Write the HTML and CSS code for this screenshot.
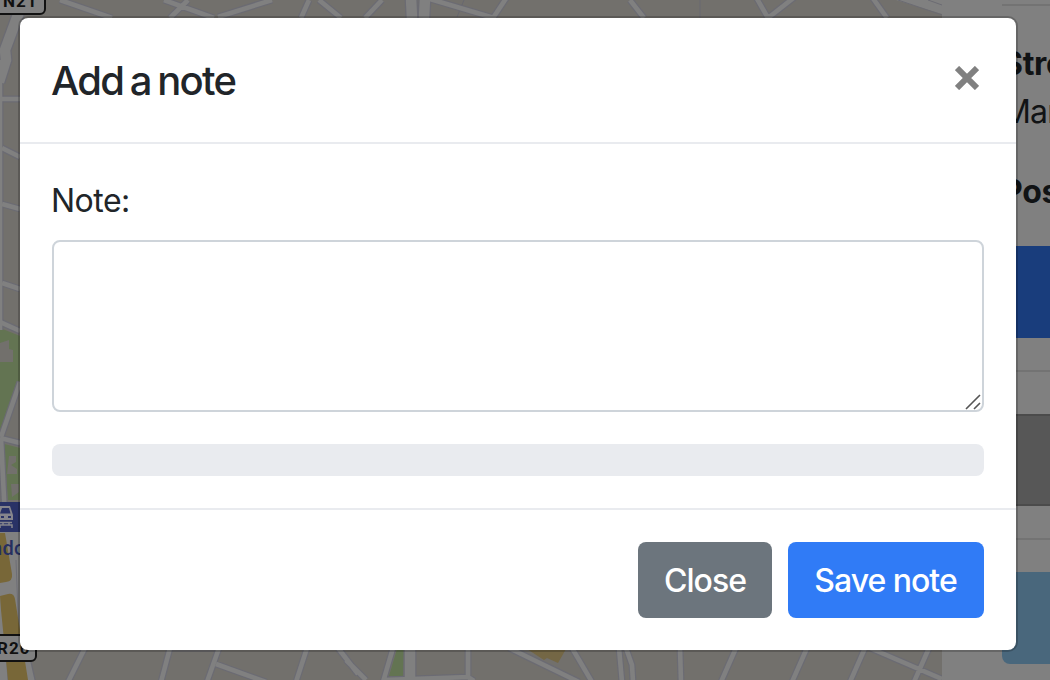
FILE: index.html
```html
<!DOCTYPE html>
<html lang="en">
<head>
<meta charset="utf-8">
<title>Add a note</title>
<link rel="stylesheet" href="styles.css">
</head>
<body>
<div class="page">
  <svg class="map" viewBox="0 0 942 680" aria-hidden="true">
    <defs>
      <g id="streets">
        <path d="M60 0l52 18M164 0l50 18M188 0l-18 18M272 0l-54 17M309 0l-8 18M319 0l22 18M382 0l-17 18M430-1l64 19M507-3l-14 21M630 0l14 18M756-3l12 21M796-4l-28 22M872-3l15 21M900-4l42 14"/>
        <path d="M0 99h20M2 148l18 9M2 204l18 5M2 283l18 6M-2 321l22 10M20 382L1 437M0 438l20 5M1 438l5 100"/>
        <path d="M85 648L68 682M170 648l-9 34M219 648l-12 34M216 664l50 18M307 648l-11 34M338 648l20 26M346 660l20 20M393 648l-10 34M468 648v28M383 680l85-3 6 4M509 648l70 34M572 648l20 34M619 648l3 34M626 648l6 17 1 17M680 648l1 34M736 648l-15 34M807 648l-15 34M865 648l-15 34M870 648l72 31M929 648l-15 34"/>
      </g>
      <g id="avenues">
        <path d="M19 12L5 50l1 10-7 22M411-2l1 20M425-2l-1 20M410 648v34M-3 60v270"/>
        <path d="M1 560l6 120M20 640l10 44"/>
      </g>
    </defs>
    <rect width="942" height="680" fill="#72706c"/>
    <path d="M700 0v18M464 0l-7 17M170 651h48" stroke="#686870"/>
    <g fill="#637452">
      <path d="M0 328l20 8v44L0 430zM4 444l16 4v52H8zM397 649h7l-1 27h-14z"/>
    </g>
    <path d="M0 343l9-3v9l4 1v12H0zM9 456h7v6l-5 3 6 4v5H7zM11 484h8v8l-7 5z" fill="#72706c"/>
    <path d="M527 649h39l-8 14-11-5-3 2z" fill="#746745"/>
    <g fill="none" stroke="#6b6b73">
      <use href="#streets" stroke-width="7"/>
      <use href="#avenues" stroke-width="13"/>
    </g>
    <g fill="none" stroke="#808080">
      <use href="#streets" stroke-width="4.6"/>
      <use href="#avenues" stroke-width="10.5"/>
    </g>
    <path d="M896 0h46v14z" fill="#808080"/>
    <path d="M898 0l44 15M928 0l14 5" stroke="#6b6b73"/>
    <path d="M0 502h20v128l14 52H0z" fill="#808080"/>
    <path d="M3 596l5 86M16 560l3 80" stroke="#6e6e76"/>
    <g fill="#786738">
      <path d="M0 533h5l7 41q1 7-6 8l-6 1zM0 596l8-2q6-1 7 5l13 81H8L1 610z"/>
    </g>
    <rect y="502" width="20" height="30" fill="#293266"/>
    <path d="M0 506h10l3 9v5H-1v-5z" fill="#85858c"/>
    <path d="M2 508h7l1.500 5.500H0zM1 516h3v2H1zM8 516h3v2H8z" fill="#293266"/>
    <path d="M0 522.500h12M3 522v3H0v3M9 522v3h3v3M3 525h6" fill="none" stroke="#85858c" stroke-width="1.500"/>
    <text class="map-station" x="-9" y="555">ndo</text>
    <g class="shield">
      <rect x="-30" y="-15" width="75" height="29" rx="5"/>
      <text x="3" y="7">N21</text>
      <rect x="-30" y="635" width="66" height="26" rx="5"/>
      <text x="-3" y="654">R20</text>
    </g>
  </svg>
  <aside class="sidebar">
    <hr class="rule">
    <div class="field-name">Street:</div>
    <div class="field-value">Maria</div>
    <div class="field-name field-name-post">Postcode:</div>
    <div class="block block-primary"></div>
    <hr class="rule">
    <div class="block block-dark"></div>
    <hr class="rule">
    <div class="block block-info"></div>
  </aside>
</div>
<section class="modal" role="dialog" aria-labelledby="title">
  <header class="modal-header">
    <h1 class="modal-title" id="title">Add a note</h1>
    <button class="dismiss" aria-label="Close">
      <svg width="24" height="24" viewBox="0 0 24 24"><path d="M2 2l20 20M22 2L2 22" stroke="#808080" stroke-width="6"/></svg>
    </button>
  </header>
  <div class="modal-body">
    <label class="label" for="note">Note:</label>
    <div class="note-box">
      <textarea class="note" id="note"></textarea>
      <svg class="grip" width="16" height="16" viewBox="0 0 16 16"><path d="M1 15L15 1M9 15l6-6" stroke="#555" stroke-width="1.6"/></svg>
    </div>
    <div class="progress"></div>
  </div>
  <footer class="modal-footer">
    <button class="btn btn-secondary">Close</button>
    <button class="btn btn-primary">Save note</button>
  </footer>
</section>
</body>
</html>
```
FILE: styles.css
```css
* { box-sizing: border-box; }
body {
  margin: 0;
  width: 1050px;
  height: 680px;
  overflow: hidden;
  background: #808080;
  color: #212529;
  font-family: Inter, "Liberation Sans", sans-serif;
  font-size: 32px;
}
.page { display: flex; width: 1050px; height: 680px; }
.map { flex: 0 0 942px; height: 680px; display: block; }
.map-station { font: 500 20px Roboto, sans-serif; fill: #262f60; letter-spacing: .3px; }
.shield rect { fill: #808080; stroke: #111; stroke-width: 2; }
.shield text { font: 700 17px Roboto, sans-serif; fill: #111; letter-spacing: 1px; }
.sidebar {
  flex: 0 0 108px;
  padding: 4px 0 0 60px;
  overflow: hidden;
  white-space: nowrap;
  color: #111315;
}
.rule { margin: 0; border: 0; height: 2px; background: #737373; }
.field-name { margin-top: 32px; padding-top: 2px; height: 48px; font-weight: 700; line-height: 48px; letter-spacing: -.3px; }
.field-value { padding-top: 2px; height: 48px; line-height: 48px; letter-spacing: -.8px; }
.block { height: 92px; margin: 32px 0; width: 200px; }
.block-primary { background: #193d7c; }
.block-dark { margin: 42px 0 32px; background: #575757; border: 2px solid #4b4b4b; }
.block-info { background: #49677c; border-radius: 0 0 8px 8px; }
.modal {
  position: absolute;
  left: 18px;
  top: 16px;
  width: 1000px;
  height: 636px;
  display: flex;
  flex-direction: column;
  border: 2px solid rgba(0, 0, 0, .2);
  border-radius: 10px;
  background: #fff;
  background-clip: padding-box;
}
.modal-header {
  display: flex;
  justify-content: space-between;
  height: 126px;
  padding: 32px 32px 32px 31px;
  border-bottom: 2px solid #e9ebef;
}
.modal-title {
  margin: 0;
  padding-top: 1px;
  font-size: 40px;
  line-height: 60px;
  font-weight: 500;
  letter-spacing: -1.8px;
  word-spacing: -2.2px;
}
.dismiss { width: 24px; height: 24px; margin: 16px 5px 0 0; padding: 0; border: 0; background: none; }
.dismiss svg { display: block; }
.modal-body { flex: 1; padding: 32px; }
.label { display: block; height: 48px; padding-top: 1px; margin: 0 0 16px -1px; line-height: 48px; letter-spacing: -.5px; }
.note-box { position: relative; height: 172px; }
.note {
  display: block;
  width: 100%;
  height: 100%;
  border: 2px solid #ced4da;
  border-radius: 8px;
  resize: none;
  background: #fff;
}
.grip { position: absolute; right: 3px; bottom: 2px; }
.progress { height: 32px; margin-top: 32px; border-radius: 8px; background: #e9ebef; }
.modal-footer {
  display: flex;
  justify-content: flex-end;
  gap: 16px;
  height: 142px;
  padding: 32px;
  border-top: 2px solid #e9ebef;
}
.btn {
  height: 76px;
  padding: 2px 0 0;
  border: 0;
  border-radius: 8px;
  color: #fff;
  font: 500 32px/74px Inter, "Liberation Sans", sans-serif;
  letter-spacing: -1px;
}
.btn-secondary { width: 134px; background: #6c757d; }
.btn-primary { width: 196px; padding-right: 1px; background: #307bf6; }
```
